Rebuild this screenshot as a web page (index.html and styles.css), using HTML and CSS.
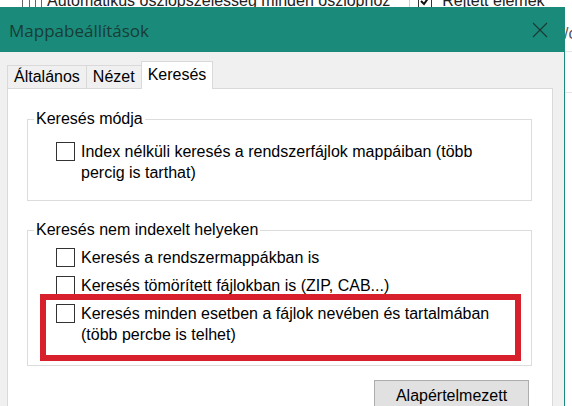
FILE: index.html
```html
<!DOCTYPE html>
<html lang="hu">
<head>
<meta charset="utf-8">
<title>Mappabeállítások</title>
<link rel="stylesheet" href="styles.css">
</head>
<body>
<div class="app">
  <div class="toolbar">
    <span class="tb-item">
      <svg class="tb-icon" width="20" height="16" viewBox="0 0 20 16" aria-hidden="true">
        <rect x="0.5" y="0.5" width="19" height="15" fill="none" stroke="#666"/>
        <line x1="0.5" y1="5.5" x2="19.5" y2="5.5" stroke="#666"/>
        <line x1="7.5" y1="0.5" x2="7.5" y2="15.5" stroke="#666"/>
        <line x1="13.5" y1="0.5" x2="13.5" y2="15.5" stroke="#666"/>
      </svg>
      <span>Automatikus oszlopszélesség minden oszlophoz</span>
    </span>
    <span class="tb-sep"></span>
    <span class="tb-item tb-item-check">
      <span class="tb-check">
        <svg width="12" height="12" viewBox="0 0 12 12" aria-hidden="true"><path d="M2 6 L5 9 L10 2" fill="none" stroke="#111" stroke-width="2"/></svg>
      </span>
      <span>Rejtett elemek</span>
    </span>
  </div>
  <div class="bg-row"><span class="bg-cell">/cím</span></div>
  <div class="bg-row"></div>
</div>

<div class="dialog">
  <div class="titlebar">
    <span class="title">Mappabeállítások</span>
    <svg class="close" width="16" height="16" viewBox="0 0 16 16" aria-hidden="true">
      <path d="M1 1 L15 15 M15 1 L1 15" stroke="#1b3a34" stroke-width="1.2" fill="none"/>
    </svg>
  </div>
  <div class="dlg-body">
    <div class="tabs">
      <div class="tab">Általános</div>
      <div class="tab">Nézet</div>
      <div class="tab active">Keresés</div>
    </div>
    <div class="page">
      <fieldset class="group g1">
        <legend>Keresés módja</legend>
        <div class="opt">
          <span class="box"></span>
          <span class="txt">Index nélküli keresés a rendszerfájlok mappáiban (több percig is tarthat)</span>
        </div>
      </fieldset>
      <fieldset class="group g2">
        <legend>Keresés nem indexelt helyeken</legend>
        <div class="opt">
          <span class="box"></span>
          <span class="txt">Keresés a rendszermappákban is</span>
        </div>
        <div class="opt">
          <span class="box"></span>
          <span class="txt">Keresés tömörített fájlokban is (ZIP, CAB...)</span>
        </div>
        <div class="opt hl">
          <span class="box"></span>
          <span class="txt">Keresés minden esetben a fájlok nevében és tartalmában (több percbe is telhet)</span>
        </div>
      </fieldset>
      <div class="actions">
        <button class="btn" type="button">Alapértelmezett</button>
      </div>
    </div>
  </div>
</div>
</body>
</html>
```

FILE: styles.css
```css
*, *::before, *::after { box-sizing: border-box; }

html, body { margin: 0; }

body {
  width: 572px;
  height: 406px;
  overflow: hidden;
  position: relative;
  background: #fff;
  font-family: "Liberation Sans", Arial, sans-serif;
  font-size: 16px;
  color: #000;
}

/* background application (behind the dialog) */
.toolbar {
  display: flex;
  align-items: center;
  height: 20px;
  margin-top: -9px;
  padding-left: 22px;
  line-height: 20px;
  color: #222;
  white-space: nowrap;
}

.tb-item {
  display: flex;
  align-items: center;
  gap: 5px;
}

.tb-item-check { gap: 10px; }

.tb-sep {
  width: 1px;
  height: 22px;
  background: #d0d0d0;
  margin: 0 8px 0 19px;
}

.tb-check {
  width: 14px;
  height: 14px;
  border: 1px solid #333;
  display: flex;
  align-items: center;
  justify-content: center;
}

.bg-row {
  height: 41px;
  border-bottom: 1px solid #e6e6e6;
  padding: 13px 0 0 564px;
  line-height: 20px;
  color: #555;
  white-space: nowrap;
}

/* dialog window */
.dialog {
  position: absolute;
  left: -1px;
  top: 7px;
  width: 566px;
  height: 420px;
  border: 1px solid #1a8b7b;
  background: #f0f0f0;
  display: flex;
  flex-direction: column;
}

.titlebar {
  flex: none;
  height: 44px;
  background: #1a8b7b;
  display: flex;
  align-items: center;
  justify-content: space-between;
  padding: 0 16px 0 9px;
}

.title {
  font-family: "Open Sans", "Noto Sans", sans-serif;
  font-size: 17px;
  color: #183d36;
}

.dlg-body {
  flex: 1;
  display: flex;
  flex-direction: column;
  padding: 9px 11px 0 7px;
}

.tabs {
  display: flex;
  align-items: flex-end;
  height: 27px;
}

.tab {
  height: 23px;
  padding: 0 6px;
  border: 1px solid #d9d9d9;
  border-bottom: none;
  border-right: none;
  background: #f0f0f0;
  display: flex;
  align-items: center;
  line-height: 1;
  white-space: nowrap;
}

.tab.active {
  height: 28px;
  margin-bottom: -1px;
  background: #fff;
  border-right: 1px solid #d9d9d9;
  padding-bottom: 2px;
  position: relative;
  z-index: 1;
}

.page {
  flex: 1;
  background: #fff;
  border: 1px solid #d9d9d9;
  padding: 20px 20px 0 19px;
}

.group {
  margin: 0;
  border: 1px solid #dcdcdc;
  padding: 0 10px 0 6px;
  min-width: 0;
}

.group legend {
  padding: 0 2px;
  line-height: 20px;
}

.g1 {
  padding-top: 12px;
  padding-bottom: 17px;
}

.g2 {
  margin-top: 19px;
  padding-top: 7px;
  padding-bottom: 20px;
}

.opt {
  display: flex;
  align-items: flex-start;
  gap: 6px;
  margin-left: 22px;
  line-height: 21px;
  position: relative;
}

.opt + .opt { margin-top: 7px; }

.box {
  flex: none;
  width: 19px;
  height: 19px;
  border: 1px solid #333;
  background: #fff;
  margin-top: 1px;
}

.txt { max-width: 420px; }

.hl::after {
  content: "";
  position: absolute;
  left: -16px;
  top: -9px;
  width: 481px;
  height: 67px;
  border: 6px solid #d7202c;
}

.actions {
  display: flex;
  justify-content: flex-end;
  margin-top: 14px;
  padding-right: 3px;
}

.btn {
  width: 155px;
  height: 31px;
  padding: 0;
  background: #e1e1e1;
  border: 1px solid #adadad;
  font-family: "Liberation Sans", Arial, sans-serif;
  font-size: 16px;
  color: #000;
}
```
